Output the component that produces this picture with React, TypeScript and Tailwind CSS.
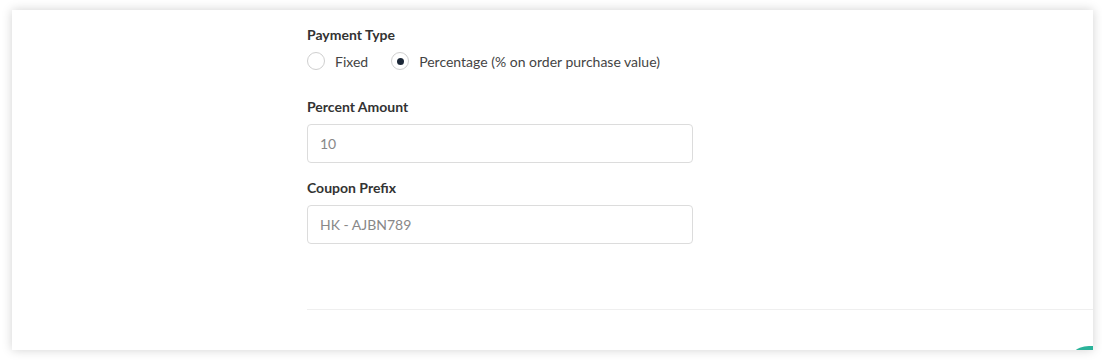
import React from "react";

export default function App() {
  return (
    <div className="w-[1102px] h-[360px] bg-white pt-[10px] pl-[12px] overflow-hidden" style={{ fontFamily: "Lato, 'Open Sans', sans-serif" }}>
      <div className="relative w-[1081px] h-[340px] bg-white shadow-[0_0_10px_rgba(0,0,0,0.18)] overflow-hidden pt-[15px] pl-[295px]">
        <div className="flex flex-col">
          <div className="text-[14px] leading-[20px] font-bold text-[#333]">Payment Type</div>
          <div className="mt-[6px] flex items-center h-[20px] text-[14px] text-[#444]">
            <span className="w-[18px] h-[18px] rounded-full border border-[#cfcfcf] bg-white"></span>
            <span className="ml-[10px]">Fixed</span>
            <span className="ml-[23px] w-[18px] h-[18px] rounded-full border border-[#cfcfcf] bg-white flex items-center justify-center">
              <span className="w-[7px] h-[7px] rounded-full bg-[#1c2838]"></span>
            </span>
            <span className="ml-[10px]">Percentage (% on order purchase value)</span>
          </div>
          <div className="mt-[26px] text-[14px] leading-[20px] font-bold text-[#333]">Percent Amount</div>
          <div className="mt-[7px] w-[386px] h-[39px] border border-[#dcdcdc] rounded-[4px] flex items-center px-[12px] text-[14px] text-[#888]">10</div>
          <div className="mt-[15px] text-[14px] leading-[20px] font-bold text-[#333]">Coupon Prefix</div>
          <div className="mt-[7px] w-[386px] h-[39px] border border-[#dcdcdc] rounded-[4px] flex items-center px-[12px] text-[14px] text-[#888]">HK - AJBN789</div>
          <div className="mt-[65px] h-px bg-[#efefef]"></div>
        </div>
        <div className="absolute right-0 bottom-[-30px] w-[28px] h-[34px] rounded-tl-[24px] bg-[#2bb39a]"></div>
      </div>
    </div>
  );
}
